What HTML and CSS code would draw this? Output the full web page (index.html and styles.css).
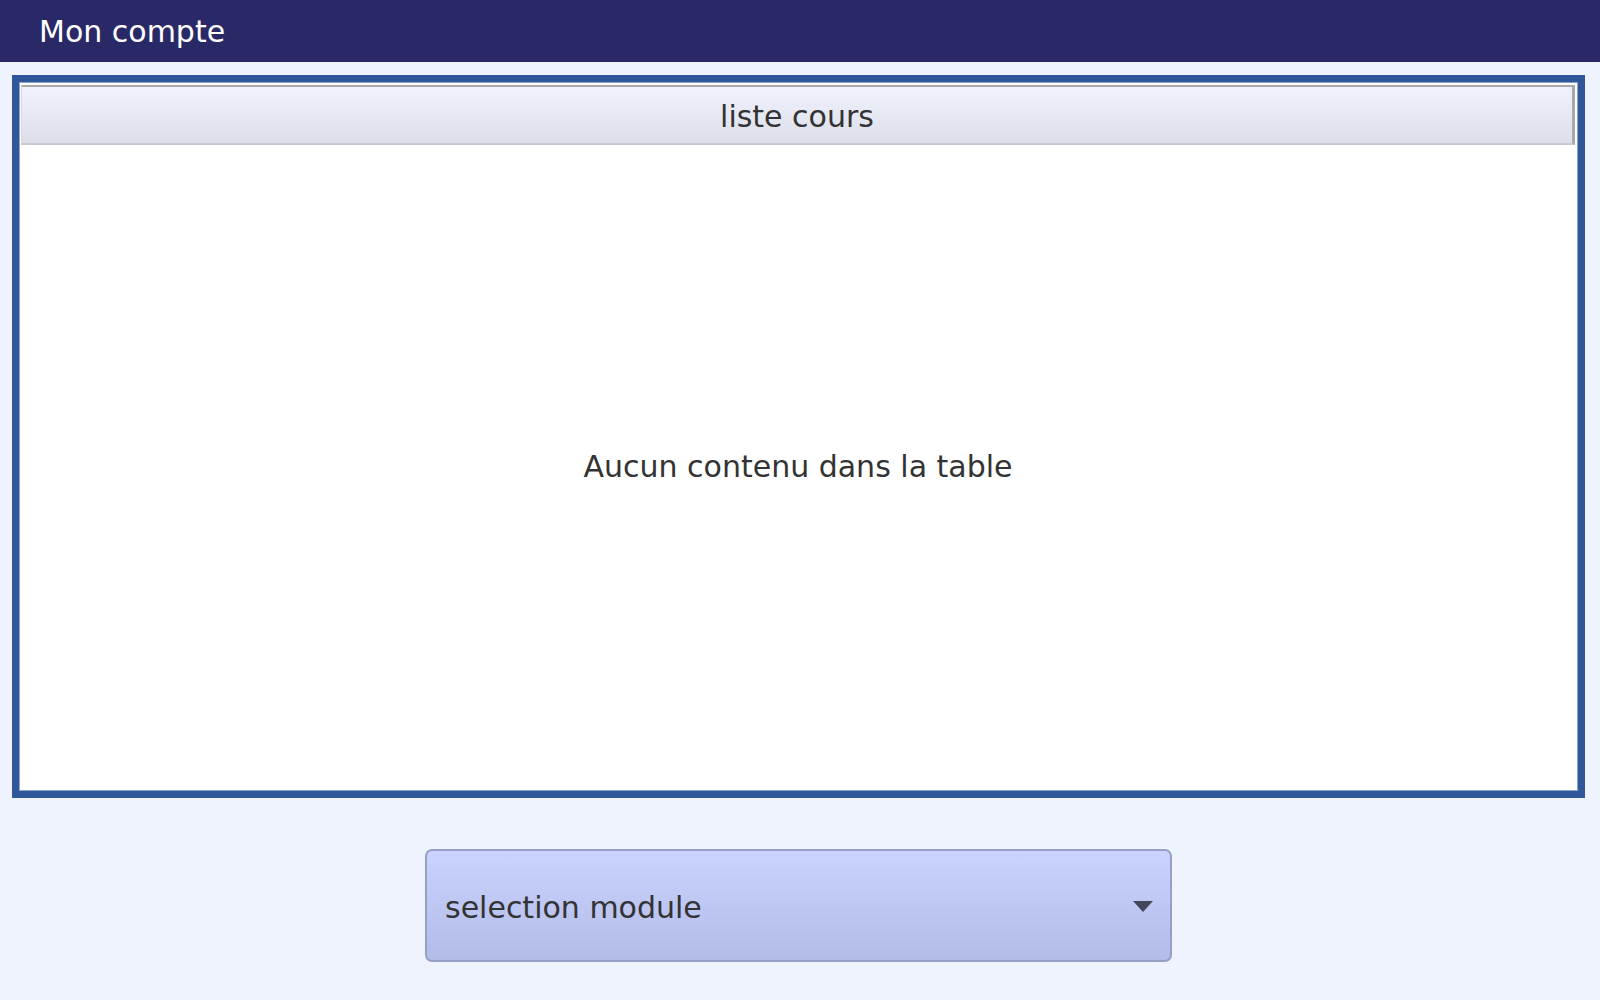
FILE: index.html
```html
<!DOCTYPE html>
<html lang="fr">
<head>
<meta charset="utf-8">
<title>Mon compte</title>
<link rel="stylesheet" href="styles.css">
</head>
<body>
<header class="topbar">
  <span class="topbar-title">Mon compte</span>
</header>
<main class="content">
  <section class="table-box">
    <div class="table-inner">
      <div class="table-header">liste cours</div>
      <div class="table-body">Aucun contenu dans la table</div>
    </div>
  </section>
  <div class="select-row">
    <div class="select-box">
      <span class="select-label">selection module</span>
      <svg class="select-arrow" width="20" height="11" viewBox="0 0 20 11"><path d="M0 0 H20 L10 11 Z" fill="#44475a"/></svg>
    </div>
  </div>
</main>
</body>
</html>
```

FILE: styles.css
```css
html, body {
  margin: 0;
  padding: 0;
}
body {
  width: 1600px;
  height: 1000px;
  background: #eff3fd;
  font-family: "DejaVu Sans", Verdana, sans-serif;
  font-size: 30px;
  color: #333333;
  overflow: hidden;
}
.topbar {
  height: 62px;
  background: #2a2968;
  display: flex;
  align-items: center;
  padding-left: 39px;
  box-sizing: border-box;
}
.topbar-title {
  color: #ffffff;
  font-size: 30px;
  line-height: 1;
  margin-top: 2px;
}
.content {
  padding: 13px 15px 0 12px;
}
.table-box {
  height: 723px;
  box-sizing: border-box;
  border: 7px solid #2f579a;
  background: #ffffff;
}
.table-inner {
  height: 100%;
  box-sizing: border-box;
  border: 1px solid #8ba3cc;
  padding: 2px 2px 0 1px;
  display: flex;
  flex-direction: column;
}
.table-header {
  height: 60px;
  box-sizing: border-box;
  border-top: 2px solid #a9a9a9;
  border-right: 3px solid #a9a9a9;
  border-left: 1px solid #d6d8e2;
  border-bottom: 2px solid #c8c9d3;
  background: linear-gradient(#f0f2fd, #dcdfea);
  display: flex;
  align-items: center;
  justify-content: center;
  padding-top: 2px;
}
.table-body {
  flex: 1;
  display: flex;
  align-items: center;
  justify-content: center;
  padding-bottom: 2px;
}
.select-row {
  display: flex;
  justify-content: center;
  margin-top: 51px;
}
.select-box {
  width: 747px;
  height: 113px;
  box-sizing: border-box;
  border: 2px solid #969fc6;
  border-radius: 7px;
  background: linear-gradient(#cad3fd, #b3bbe9);
  display: flex;
  align-items: center;
  justify-content: space-between;
  padding: 0 17px 0 18px;
}
.select-label {
  margin-top: 3px;
}
.select-arrow {
  display: block;
  margin-top: 2px;
}
```
